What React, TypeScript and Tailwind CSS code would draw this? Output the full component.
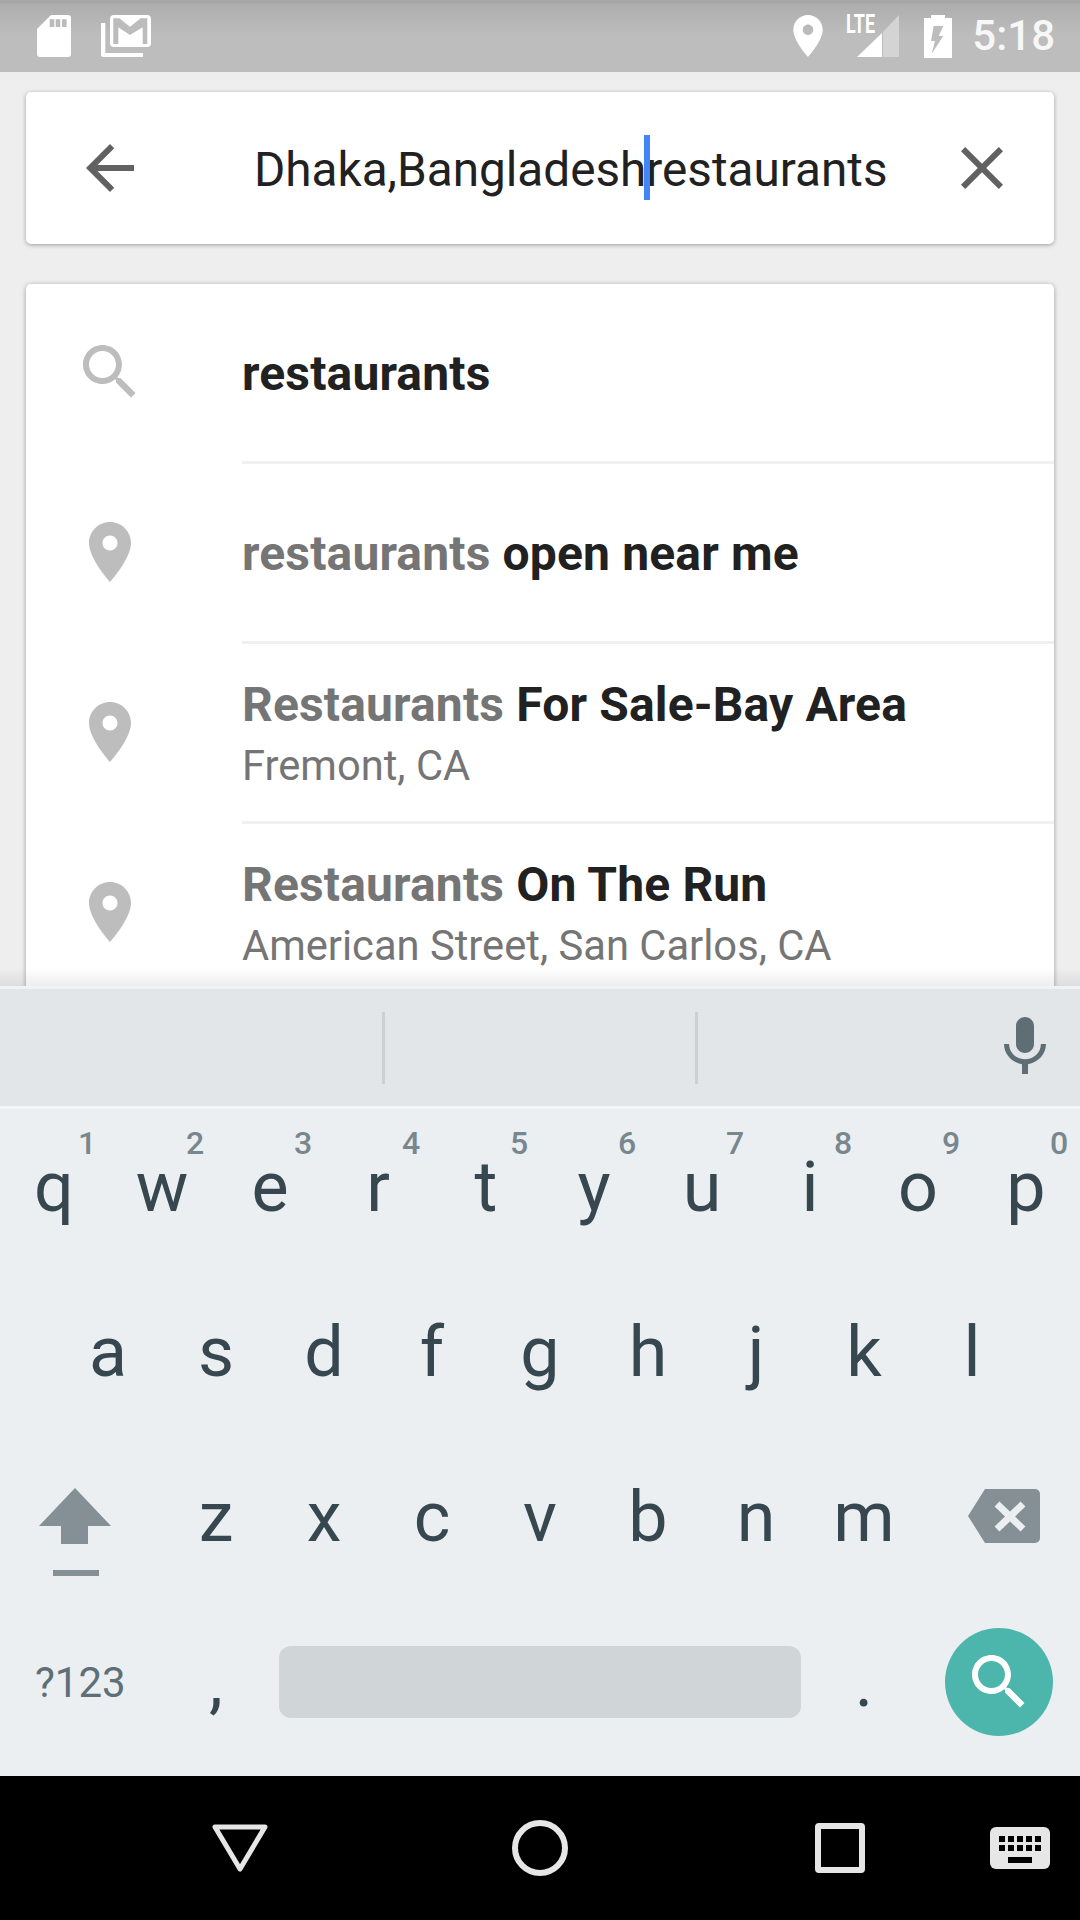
import React from 'react'

const PLACE =
  'M12 2C8.13 2 5 5.13 5 9c0 5.25 7 13 7 13s7-7.75 7-13c0-3.87-3.13-7-7-7zm0 9.5c-1.38 0-2.5-1.12-2.5-2.5s1.12-2.5 2.5-2.5 2.5 1.12 2.5 2.5-1.12 2.5-2.5 2.5z'
const SEARCH =
  'M15.5 14h-.79l-.28-.27C15.41 12.59 16 11.11 16 9.5 16 5.91 13.09 3 9.5 3S3 5.91 3 9.5 5.91 16 9.5 16c1.61 0 3.09-.59 4.23-1.57l.27.28v.79l5 4.99L20.49 19l-4.99-5zm-6 0C7.01 14 5 11.99 5 9.5S7.01 5 9.5 5 14 7.01 14 9.5 11.99 14 9.5 14z'
const BACK = 'M20 11H7.83l5.59-5.59L12 4l-8 8 8 8 1.41-1.41L7.83 13H20v-2z'
const CLOSE =
  'M19 6.41L17.59 5 12 10.59 6.41 5 5 6.41 10.59 12 5 17.59 6.41 19 12 13.41 17.59 19 19 17.59 13.41 12z'
const MIC =
  'M12 14c1.66 0 3-1.34 3-3V5c0-1.66-1.34-3-3-3S9 3.34 9 5v6c0 1.66 1.34 3 3 3zm5.3-3c0 3-2.54 5.1-5.3 5.1S6.7 14 6.7 11H5c0 3.41 2.72 6.23 6 6.72V21h2v-3.28c3.28-.48 6-3.3 6-6.72h-1.7z'

function Icon({ d, className }: { d: string; className: string }) {
  return (
    <svg viewBox="0 0 24 24" className={className} fill="currentColor">
      <path d={d} />
    </svg>
  )
}

function StatusBar() {
  return (
    <div className="flex h-[72px] shrink-0 items-center bg-[linear-gradient(#a6a6a6_0,#a6a6a6_3px,#adadad_4px,#bdbdbd_36px,#bdbdbd_100%)] pl-[37px] text-white">
      <svg viewBox="0 0 34 42" className="h-[42px] w-[34px]">
        <path d="M14 0H31a3 3 0 0 1 3 3V39a3 3 0 0 1-3 3H3a3 3 0 0 1-3-3V14Z" fill="#fff" />
        <path d="M12.7 4.3h4.6V12h-4.6zM18.7 4.3h4.6V12h-4.6zM25 4.3h4.6V12H25z" fill="#bbb" />
      </svg>
      <svg viewBox="0 0 50 42" className="ml-[30px] h-[42px] w-[50px]">
        <path d="M0 8h4.3v30H42v4H2a2 2 0 0 1-2-2Z" fill="#fff" />
        <rect x="9" y="0" width="41" height="32" rx="4" fill="#fff" />
        <path d="M12.3 3.3h6L29 11.7l10.7-8.4h6.6V29h-4.6V12.3L29 20l-11.7-7.7V29h-5Z" fill="#bcbcbc" />
      </svg>
      <svg viewBox="5 2 14 20" className="ml-auto h-[42px] w-[30px]" fill="#fff">
        <path d={PLACE} />
      </svg>
      <div className="relative ml-[33px] h-[42px] w-[43px]">
        <svg viewBox="0 0 43 42" className="h-[42px] w-[43px]">
          <path d="M1 42 26 18V42Z" fill="#fff" />
          <path d="M27 17 43 0V42H27Z" fill="#d4d4d4" />
        </svg>
        <span className="absolute top-[-3px] left-[-10px] origin-left scale-x-[0.72] text-[25px] leading-[26px] font-bold text-white">
          LTE
        </span>
      </div>
      <svg viewBox="0 0 28 43" className="ml-[25px] h-[43px] w-[28px]">
        <path d="M7 0h14v3h7v40H0V3h7Z" fill="#fff" />
        <path d="M9.7 11h9.6l-4.6 10h4.6L7.7 38.7 11 26H7Z" fill="#bcbcbc" />
      </svg>
      <span className="mr-[25px] ml-[20px] text-[42px] leading-[72px] font-medium text-[#f7f7f7]">5:18</span>
    </div>
  )
}

function SearchBox() {
  return (
    <div className="mx-[26px] mt-[20px] flex h-[152px] items-center rounded-[5px] bg-white pl-[48px] shadow-[0_1px_4px_rgba(0,0,0,0.35)]">
      <Icon d={BACK} className="h-[72px] w-[72px] shrink-0 text-[#616161]" />
      <span className="mt-[3px] ml-[108px] text-[47.7px] leading-[56px] whitespace-nowrap text-[#212121]">
        Dhaka,Bangladesh
        <span className="relative inline-block h-0 w-0">
          <span className="absolute top-[-51px] left-[-2px] h-[65px] w-[6px] bg-[#4285f4]" />
        </span>
        restaurants
      </span>
      <Icon d={CLOSE} className="mr-[36px] ml-auto h-[72px] w-[72px] shrink-0 text-[#616161]" />
    </div>
  )
}

const suggestions = [
  { gray: '', dark: 'restaurants', sub: '', icon: SEARCH },
  { gray: 'restaurants', dark: 'open near me', sub: '', icon: PLACE },
  { gray: 'Restaurants', dark: 'For Sale-Bay Area', sub: 'Fremont, CA', icon: PLACE },
  { gray: 'Restaurants', dark: 'On The Run', sub: 'American Street, San Carlos, CA', icon: PLACE },
]

function Suggestions() {
  return (
    <div className="mx-[26px] mt-[40px] rounded-[5px] bg-white shadow-[0_1px_5px_rgba(0,0,0,0.35)]">
      {suggestions.map((s) => (
        <div key={s.dark} className="flex h-[180px] items-center pl-[48px]">
          <Icon d={s.icon} className="mb-[4px] h-[72px] w-[72px] shrink-0 text-[#bdbdbd]" />
          <div
            className={
              s.sub
                ? 'ml-[96px] flex h-full flex-1 flex-col justify-center border-b-[3px] border-[#f0f0f0] pt-[6px]'
                : 'ml-[96px] flex h-full flex-1 flex-col justify-center border-b-[3px] border-[#f0f0f0] pt-[2px]'
            }
          >
            <div className="text-[48px] leading-[60px] font-bold tracking-[0.15px] text-[#212121]">
              {s.gray && <span className="text-[#757575]">{s.gray} </span>}
              {s.dark}
            </div>
            {s.sub && <div className="mt-[1px] text-[41.7px] leading-[60px] text-[#757575]">{s.sub}</div>}
          </div>
        </div>
      ))}
    </div>
  )
}

const letterRow = ['q', 'w', 'e', 'r', 't', 'y', 'u', 'i', 'o', 'p']
const hints = ['1', '2', '3', '4', '5', '6', '7', '8', '9', '0']

function Key({ label, hint }: { label: string; hint?: string }) {
  return (
    <div className="relative flex h-full w-[108px] items-center justify-center pb-[9px] text-[70px] text-[#37474f]">
      {hint && (
        <span className="absolute top-[15px] left-[87px] -translate-x-1/2 text-[32px] leading-[38px] font-medium text-[#78878e]">
          {hint}
        </span>
      )}
      {label}
    </div>
  )
}

function Keyboard() {
  return (
    <div className="relative shrink-0 bg-[#ebeff2] pb-[7px]">
      {/* soft shade the keyboard drops on the list behind it */}
      <div className="absolute bottom-full left-0 w-full">
        <div className="h-[18px] bg-[linear-gradient(rgba(0,0,0,0),rgba(0,0,0,0.07))]" />
        <div className="h-[3px] bg-[#f1f2f3]" />
      </div>
      <div className="flex h-[117px] items-center bg-[#e3e6e9]">
        <div className="ml-[382px] h-[72px] w-[3px] bg-[#ccd0d3]" />
        <div className="ml-[310px] h-[72px] w-[3px] bg-[#ccd0d3]" />
        <Icon d={MIC} className="mb-[1px] ml-[291px] h-[72px] w-[72px] text-[#5f6d75]" />
      </div>
      <div className="h-[3px] bg-[#f3f6f8]" />
      <div className="flex h-[165px]">
        {letterRow.map((k, i) => (
          <Key key={k} label={k} hint={hints[i]} />
        ))}
      </div>
      <div className="flex h-[165px] pl-[54px]">
        {['a', 's', 'd', 'f', 'g', 'h', 'j', 'k', 'l'].map((k) => (
          <Key key={k} label={k} />
        ))}
      </div>
      <div className="flex h-[165px]">
        <div className="flex w-[162px] flex-col pt-[49px] pl-[39px]">
          <svg viewBox="0 0 72 56" className="h-[56px] w-[72px]" fill="#849095">
            <path d="M36 0 72 38H49V56H22V38H0Z" />
          </svg>
          <div className="mt-[26px] ml-[14px] h-[6px] w-[46px] bg-[#849095]" />
        </div>
        {['z', 'x', 'c', 'v', 'b', 'n', 'm'].map((k) => (
          <Key key={k} label={k} />
        ))}
        <div className="pt-[50px] pl-[50px]">
          <svg viewBox="0 0 72 54" className="h-[54px] w-[72px]">
            <path d="M0 27 17 0H67a5 5 0 0 1 5 5V49a5 5 0 0 1-5 5H17Z" fill="#849095" />
            <path d="M29 15 55 40M55 15 29 40" stroke="#ebeff2" strokeWidth="7" fill="none" />
          </svg>
        </div>
      </div>
      <div className="flex h-[165px] items-start">
        <div className="w-[162px] pt-[49px] pl-[35px] text-[42px] leading-[60px] text-[#5f6f77]">?123</div>
        <div className="h-full">
          <Key label="," />
        </div>
        <div className="mt-[42px] ml-[9px] h-[72px] w-[522px] rounded-[12px] bg-[#d0d5d8]" />
        <div className="ml-[9px] h-full">
          <Key label="." />
        </div>
        <div className="mt-[24px] ml-[27px] flex h-[108px] w-[108px] items-center justify-center rounded-full bg-[#4db6ac]">
          <Icon d={SEARCH} className="h-[72px] w-[72px] text-white" />
        </div>
      </div>
    </div>
  )
}

function NavBar() {
  return (
    <div className="flex h-[144px] shrink-0 items-center bg-black">
      <svg viewBox="0 0 56 48" className="ml-[212px] h-[48px] w-[56px]" fill="none" stroke="#e6e6e6" strokeWidth="5" strokeLinejoin="round">
        <path d="M3 3H53L28 45Z" />
      </svg>
      <div className="ml-[244px] h-[56px] w-[56px] rounded-full border-[6px] border-[#e6e6e6]" />
      <div className="ml-[247px] h-[50px] w-[50px] rounded-[4px] border-[6px] border-[#e6e6e6]" />
      <svg viewBox="0 0 60 42" className="ml-[125px] h-[42px] w-[60px]" fill="#000">
        <rect width="60" height="42" rx="6" fill="#e6e6e6" />
        {[9, 18, 27, 36, 45].map((x) => (
          <React.Fragment key={x}>
            <rect x={x} y="9" width="6" height="6" />
            <rect x={x} y="18" width="6" height="6" />
          </React.Fragment>
        ))}
        <rect x="18" y="30" width="24" height="6" />
      </svg>
    </div>
  )
}

export default function App() {
  return (
    <div className="flex h-[1920px] w-[1080px] flex-col overflow-hidden bg-[#eeeeee] font-['Roboto',sans-serif]">
      <StatusBar />
      <div className="min-h-0 flex-1 overflow-hidden">
        <SearchBox />
        <Suggestions />
      </div>
      <Keyboard />
      <NavBar />
    </div>
  )
}
